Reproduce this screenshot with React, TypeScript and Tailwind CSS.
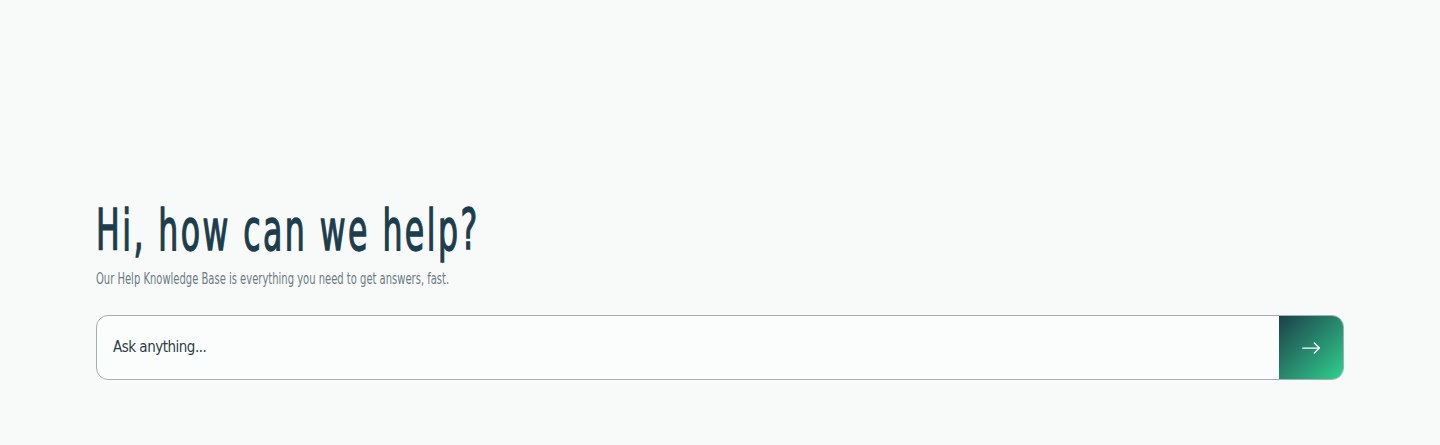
import { useState } from "react";

const narrow = { fontFamily: '"DejaVu Sans Condensed", "Liberation Sans Narrow", "Liberation Sans", sans-serif' };

function ArrowIcon() {
  return (
    <svg width="20" height="20" viewBox="0 0 24 24" fill="none" stroke="currentColor" strokeWidth="1.5" strokeLinecap="round" strokeLinejoin="round">
      <path d="M2 12h20" />
      <path d="M16 6l6 6-6 6" />
    </svg>
  );
}

export default function App() {
  const [query, setQuery] = useState("");

  return (
    <div className="min-h-[445px] w-full bg-[#f8fafa] px-24 pt-[200px]" style={narrow}>
      <h1 className="origin-left scale-x-[0.615] text-[57px] leading-[60px] tracking-[4px] text-[#1c3d4c] [-webkit-text-stroke:1.4px_#1c3d4c]">
        Hi, how can we help?
      </h1>
      <p className="mt-[9px] origin-left scale-x-[0.74] text-[15px] leading-5 text-[#6d7a82]">
        Our Help Knowledge Base is everything you need to get answers, fast.
      </p>
      <form
        className="mt-[26px] flex h-[65px] w-full overflow-hidden rounded-xl border border-[#a7aeb1] bg-[#fbfcfc]"
        onSubmit={(e) => e.preventDefault()}
      >
        <input
          value={query}
          onChange={(e) => setQuery(e.target.value)}
          placeholder="Ask anything..."
          className="flex-1 bg-transparent px-4 text-[15px] tracking-[-0.5px] text-[#2b3a42] outline-none placeholder:text-[#2f3e46]"
          style={narrow}
        />
        <button
          type="submit"
          className="flex w-16 items-center justify-center bg-gradient-to-br from-[#1b4249] to-[#2fd28e] text-white"
        >
          <ArrowIcon />
        </button>
      </form>
    </div>
  );
}
